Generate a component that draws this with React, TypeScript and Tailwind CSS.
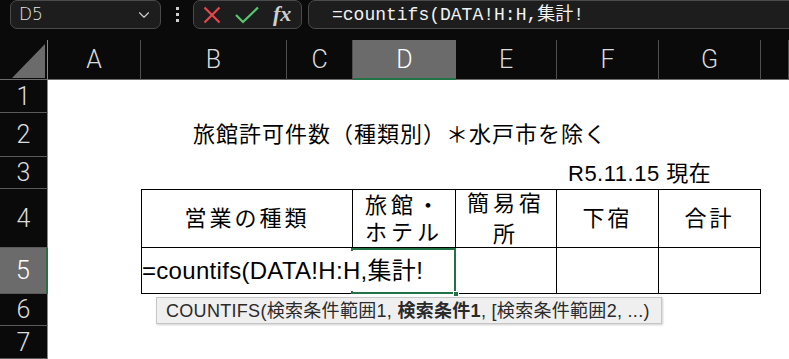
import { ChevronDown } from 'lucide-react';

const SANS = "font-['Liberation_Sans','Noto_Sans_CJK_JP',sans-serif]";

const colHeaders = [
  { label: 'A', cls: 'col-start-2' },
  { label: 'B', cls: 'col-start-3' },
  { label: 'C', cls: 'col-start-4' },
  { label: 'D', cls: 'col-start-5', active: true },
  { label: 'E', cls: 'col-start-6' },
  { label: 'F', cls: 'col-start-7' },
  { label: 'G', cls: 'col-start-8' },
  { label: '', cls: 'col-start-9' },
];

const rowHeaders = [
  { label: '1', cls: 'row-start-2' },
  { label: '2', cls: 'row-start-3' },
  { label: '3', cls: 'row-start-4' },
  { label: '4', cls: 'row-start-5' },
  { label: '5', cls: 'row-start-6', active: true },
  { label: '6', cls: 'row-start-7' },
  { label: '7', cls: 'row-start-8' },
];

function Toolbar() {
  return (
    <div className="h-[40px] flex items-start">
      <div className="shrink-0 ml-[10px] w-[151px] h-[29px] rounded-[7px] border border-[#4a4a4a] bg-[#1d1d1d] flex items-center justify-between pl-[8px] pr-[7px]">
        <span className="font-['DejaVu_Sans',sans-serif] text-[17px] font-light text-[#e8e8e8] leading-none">D5</span>
        <ChevronDown className="w-[18px] h-[18px] text-[#cfcfcf]" strokeWidth={1.5} />
      </div>
      <div className="shrink-0 w-[32px] h-[29px] flex flex-col items-center justify-center gap-[3px]">
        <span className="w-[3px] h-[3px] bg-[#cfcfcf]" />
        <span className="w-[3px] h-[3px] bg-[#cfcfcf]" />
        <span className="w-[3px] h-[3px] bg-[#cfcfcf]" />
      </div>
      <div className="shrink-0 w-[109px] h-[29px] rounded-[7px] border border-[#4a4a4a] bg-[#1d1d1d] flex items-center pl-[9px] gap-[14px]">
        <svg width="18" height="18" viewBox="0 0 18 18">
          <path d="M1.5 1.5 L16.5 16.5 M16.5 1.5 L1.5 16.5" stroke="#e5474e" strokeWidth="2.2" fill="none" />
        </svg>
        <svg width="24" height="18" viewBox="0 0 24 18">
          <path d="M1 9 L8 16 L23 1.5" stroke="#5ac46e" strokeWidth="2.2" fill="none" />
        </svg>
        <span className="font-['Liberation_Serif',serif] italic font-bold text-[22px] leading-none text-[#cfcfcf] -mt-[2px]">fx</span>
      </div>
      <div className="shrink-0 ml-[6px] w-[520px] h-[29px] rounded-l-[7px] border border-[#4a4a4a] bg-[#1d1d1d] flex items-center pl-[23px]">
        <span className="font-['Liberation_Mono','Noto_Sans_CJK_JP',monospace] text-[18px] text-[#f2f2f2] leading-none whitespace-nowrap">
          =countifs(DATA!H:H,集計!
        </span>
      </div>
    </div>
  );
}

function Sheet() {
  return (
    <div className="grid grid-cols-[48px_93px_146px_66px_103px_101px_102px_102px_28px] grid-rows-[40px_33px_44px_32px_59px_46px_32px_33px]">
      {/* corner */}
      <div className="col-start-1 row-start-1 border-r border-[#8a8a8a] border-b border-b-[#6b6b6b]">
        <svg width="47" height="39" viewBox="0 0 47 39">
          <polygon points="12,38 45,38 45,4" fill="#6b6b6b" />
        </svg>
      </div>

      {colHeaders.map(c => (
        <div
          key={c.cls}
          className={
            c.active
              ? `${c.cls} row-start-1 flex items-center justify-center bg-[#6b6b6b] border-b-2 border-[#217346] text-white font-['Roboto',sans-serif] font-light text-[25px] leading-none`
              : `${c.cls} row-start-1 flex items-center justify-center border-r border-[#4f4f4f] border-b border-b-[#6b6b6b] text-[#dcdcdc] font-['Roboto',sans-serif] font-light text-[25px] leading-none`
          }
        >
          {c.label}
        </div>
      ))}

      {rowHeaders.map(r => (
        <div
          key={r.cls}
          className={
            r.active
              ? `${r.cls} col-start-1 flex items-center justify-center bg-[#6b6b6b] border-r-2 border-r-[#217346] border-b border-b-[#5a5a5a] text-white font-['Roboto',sans-serif] font-light text-[25px] leading-none`
              : `${r.cls} col-start-1 flex items-center justify-center border-r border-r-[#8a8a8a] border-b border-b-[#5a5a5a] text-[#dcdcdc] font-['Roboto',sans-serif] font-light text-[25px] leading-none`
          }
        >
          {r.label}
        </div>
      ))}

      {/* sheet background */}
      <div className="col-start-2 col-end-10 row-start-2 row-end-9 bg-white" />

      {/* title */}
      <div className={`col-start-3 col-end-8 row-start-3 flex items-center justify-center ${SANS} text-[22px] tracking-[1px] leading-none text-black`}>
        旅館許可件数（種類別）＊水戸市を除く
      </div>
      <div className={`col-start-7 col-end-9 row-start-4 flex items-center pl-[11px] pt-[2px] ${SANS} text-[22px] tracking-[0.5px] leading-none text-black whitespace-nowrap`}>
        R5.11.15 現在
      </div>

      {/* table header row */}
      <div className={`col-start-3 col-end-5 row-start-5 flex items-center justify-center border-l border-t border-r border-b border-black ${SANS} text-[22px] tracking-[3px] leading-none text-black`}>
        営業の種類
      </div>
      <div className={`col-start-5 row-start-5 flex flex-col items-center justify-center border-t border-r border-b border-black ${SANS} text-[22px] tracking-[4px] leading-[27px] text-black pt-[1px]`}>
        <span>旅館・</span>
        <span>ホテル</span>
      </div>
      <div className={`col-start-6 row-start-5 flex flex-col items-center justify-center border-t border-r border-b border-black ${SANS} text-[22px] tracking-[4px] leading-[31px] text-black`}>
        <span>簡易宿</span>
        <span>所</span>
      </div>
      <div className={`col-start-7 row-start-5 flex items-center justify-center border-t border-r border-b border-black ${SANS} text-[22px] tracking-[3px] leading-none text-black`}>
        下宿
      </div>
      <div className={`col-start-8 row-start-5 flex items-center justify-center border-t border-r border-b border-black ${SANS} text-[22px] tracking-[3px] leading-none text-black`}>
        合計
      </div>

      {/* data row */}
      <div className="col-start-3 col-end-5 row-start-6 border-l border-r border-b border-black" />
      <div className="col-start-5 row-start-6 relative border-r border-b border-black">
        <div className="absolute left-[-2px] top-0 right-[-1px] bottom-[-1px] border-2 border-[#217346]" />
        <div className="absolute right-[-4px] bottom-[-4px] w-[6px] h-[6px] bg-[#217346] border border-white" />
      </div>
      <div className="col-start-6 row-start-6 border-r border-b border-black" />
      <div className="col-start-7 row-start-6 border-r border-b border-black" />
      <div className="col-start-8 row-start-6 border-r border-b border-black" />

      {/* in-cell editor */}
      <div className="col-start-3 col-end-6 row-start-6 relative z-10 mt-[1px] mb-[1px] ml-[1px] mr-[14px] flex items-center">
        <span className={`bg-white pr-[2px] ${SANS} text-[24px] tracking-[0.3px] leading-[40px] text-black whitespace-nowrap`}>
          =countifs(DATA!H:H,集計!
        </span>
      </div>
    </div>
  );
}

export default function App() {
  return (
    <div className="relative w-[789px] h-[359px] overflow-hidden bg-[#0a0a0a]">
      <Toolbar />
      <Sheet />
      <div className={`absolute left-[156px] top-[297px] w-[506px] h-[27px] bg-[#efefef] border border-[#c6c6c6] shadow-[1px_1px_2px_rgba(0,0,0,0.2)] flex items-center pl-[9px] ${SANS} text-[18px] tracking-[0.3px] leading-none text-[#2a2a2a] whitespace-pre`}>
        <span>COUNTIFS(検索条件範囲1,{' '}</span>
        <b className="font-bold">検索条件1</b>
        <span>, [検索条件範囲2, ...)</span>
      </div>
    </div>
  );
}
